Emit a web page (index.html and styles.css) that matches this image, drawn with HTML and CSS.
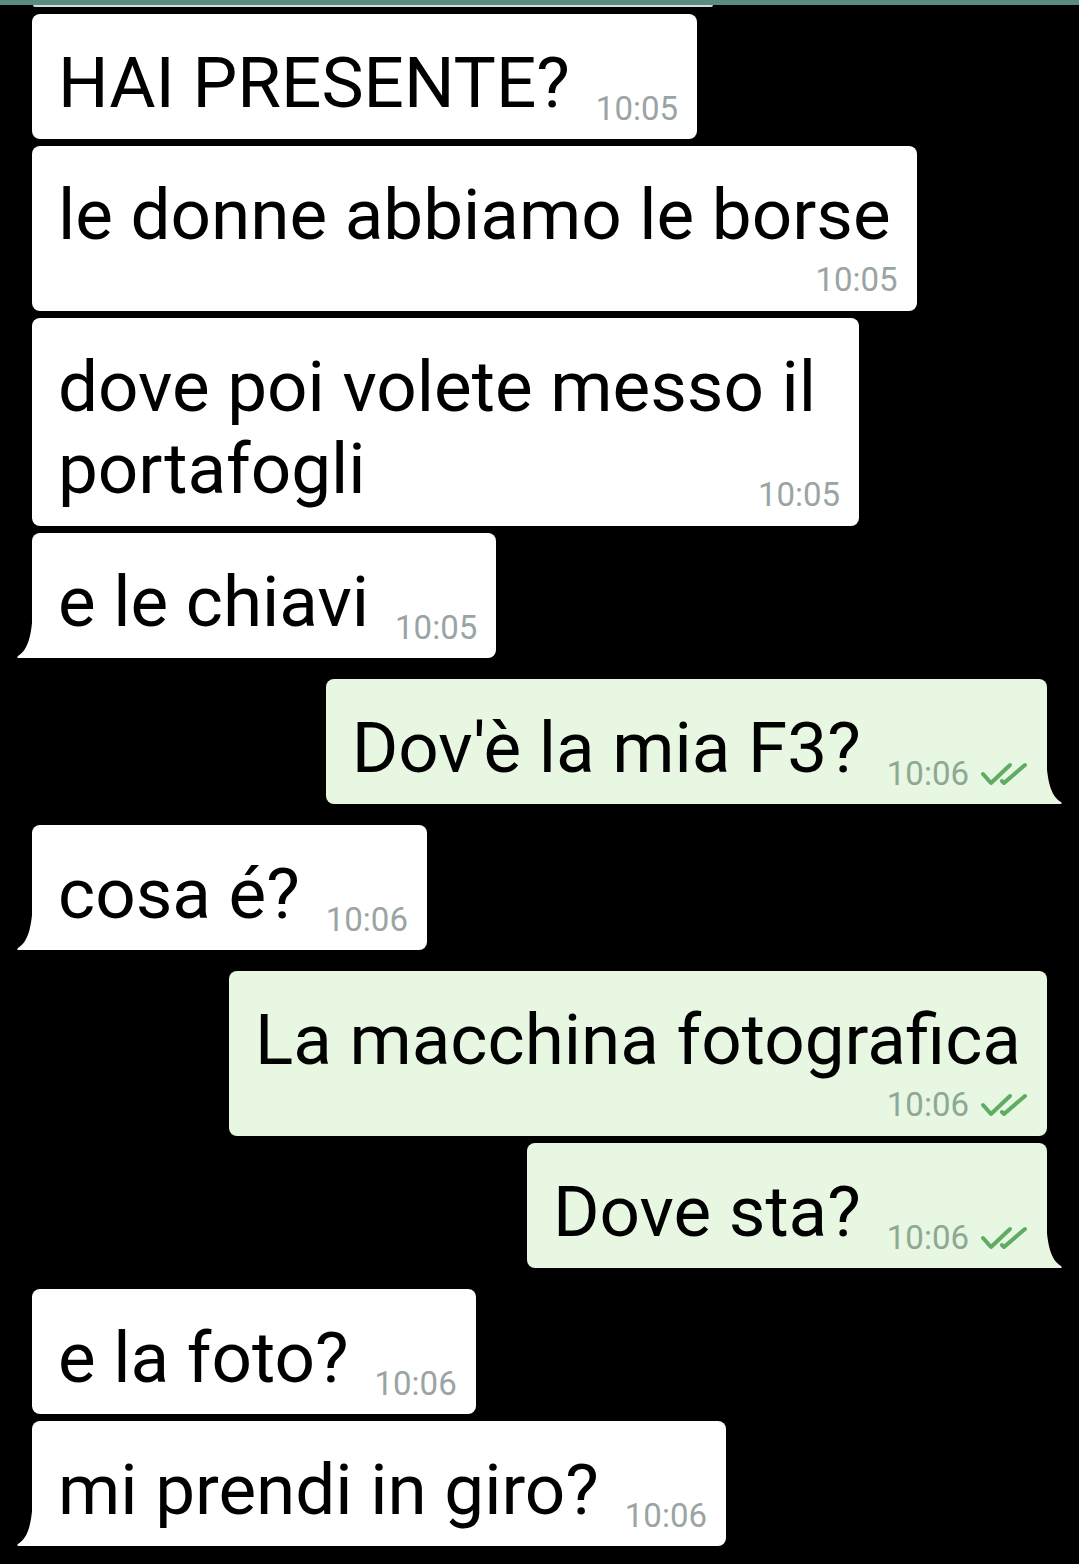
FILE: index.html
```html
<!DOCTYPE html>
<html lang="it">
<head>
<meta charset="utf-8">
<title>Chat</title>
<link rel="stylesheet" href="styles.css">
</head>
<body>
<div class="topbar"></div>
<div class="chat">
  <div class="stub"></div>

  <div class="msg in">
    <div class="bubble">
      <span class="text">HAI PRESENTE?</span>
      <span class="meta"><span class="time">10:05</span></span>
    </div>
  </div>

  <div class="msg in">
    <div class="bubble stack">
      <span class="text">le donne abbiamo le borse</span>
      <span class="meta"><span class="time">10:05</span></span>
    </div>
  </div>

  <div class="msg in">
    <div class="bubble overlay">
      <span class="text wide">dove poi volete messo il<br>portafogli</span>
      <span class="meta"><span class="time">10:05</span></span>
    </div>
  </div>

  <div class="msg in">
    <div class="bubble tail">
      <svg class="tail-shape" viewBox="0 0 17 50" width="17" height="50"><path d="M17 0 C16 28 12 42 2 48 Q0 50 3 50 L17 50 Z"/></svg>
      <span class="text">e le chiavi</span>
      <span class="meta"><span class="time">10:05</span></span>
    </div>
  </div>

  <div class="msg out group">
    <div class="bubble tail">
      <svg class="tail-shape" viewBox="0 0 17 50" width="17" height="50"><path d="M0 0 C1 28 5 42 15 48 Q17 50 14 50 L0 50 Z"/></svg>
      <span class="text">Dov'è la mia F3?</span>
      <span class="meta"><span class="time">10:06</span><svg class="ticks" viewBox="0 0 48 24" width="48" height="24"><path d="M3 12 L11 21 L30 3"/><path d="M22 19 L24 21 L45 3"/></svg></span>
    </div>
  </div>

  <div class="msg in group">
    <div class="bubble tail">
      <svg class="tail-shape" viewBox="0 0 17 50" width="17" height="50"><path d="M17 0 C16 28 12 42 2 48 Q0 50 3 50 L17 50 Z"/></svg>
      <span class="text">cosa é?</span>
      <span class="meta"><span class="time">10:06</span></span>
    </div>
  </div>

  <div class="msg out group">
    <div class="bubble stack">
      <span class="text">La macchina fotografica</span>
      <span class="meta"><span class="time">10:06</span><svg class="ticks" viewBox="0 0 48 24" width="48" height="24"><path d="M3 12 L11 21 L30 3"/><path d="M22 19 L24 21 L45 3"/></svg></span>
    </div>
  </div>

  <div class="msg out">
    <div class="bubble tail">
      <svg class="tail-shape" viewBox="0 0 17 50" width="17" height="50"><path d="M0 0 C1 28 5 42 15 48 Q17 50 14 50 L0 50 Z"/></svg>
      <span class="text">Dove sta?</span>
      <span class="meta"><span class="time">10:06</span><svg class="ticks" viewBox="0 0 48 24" width="48" height="24"><path d="M3 12 L11 21 L30 3"/><path d="M22 19 L24 21 L45 3"/></svg></span>
    </div>
  </div>

  <div class="msg in group">
    <div class="bubble">
      <span class="text">e la foto?</span>
      <span class="meta"><span class="time">10:06</span></span>
    </div>
  </div>

  <div class="msg in">
    <div class="bubble tail">
      <svg class="tail-shape" viewBox="0 0 17 50" width="17" height="50"><path d="M17 0 C16 28 12 42 2 48 Q0 50 3 50 L17 50 Z"/></svg>
      <span class="text">mi prendi in giro?</span>
      <span class="meta"><span class="time">10:06</span></span>
    </div>
  </div>
</div>
</body>
</html>
```
FILE: styles.css
```css
html, body {
  margin: 0;
  padding: 0;
  background: #000;
}
body {
  font-family: Roboto, "Noto Sans", "Liberation Sans", sans-serif;
  width: 1079px;
  height: 1564px;
  overflow: hidden;
}
.topbar {
  height: 5px;
  background: #5a8a84;
}
.chat {
  display: flex;
  flex-direction: column;
  gap: 7px;
  padding: 0 32px;
}
.stub {
  width: 680px;
  height: 2px;
  margin-left: 1px;
  background: #cfe0dc;
  border-radius: 0 0 6px 6px;
}
.msg {
  display: flex;
}
.msg.in { justify-content: flex-start; }
.msg.out { justify-content: flex-end; }
.msg.group { margin-top: 14px; }

.bubble {
  position: relative;
  display: flex;
  align-items: flex-end;
  padding: 28px 19px 11px 26px;
  border-radius: 8px;
  background: #fff;
  color: #000;
}
.msg.out .bubble {
  background: #e7f7e2;
}
.bubble.tail { border-bottom-left-radius: 0; }
.msg.out .bubble.tail { border-bottom-left-radius: 8px; border-bottom-right-radius: 0; }

.tail-shape {
  position: absolute;
  bottom: 0;
  left: -16px;
  fill: #fff;
}
.msg.out .tail-shape {
  left: auto;
  right: -16px;
  fill: #e7f7e2;
}

.text {
  font-size: 71px;
  line-height: 82px;
  margin-bottom: 4px;
  white-space: nowrap;
}
.meta {
  display: flex;
  align-items: center;
  gap: 11px;
  margin-left: 26px;
}
.time {
  font-size: 33px;
  line-height: 39px;
  color: #9aa4a4;
}
.msg.out .time { color: #8da893; }

.ticks {
  fill: none;
  stroke: #5fac63;
  stroke-width: 4;
  stroke-linecap: round;
  stroke-linejoin: round;
}

.bubble.stack {
  flex-direction: column;
  align-items: stretch;
  padding-bottom: 12px;
}
.bubble.stack .text { margin-right: 7px; }
.bubble.stack .meta {
  align-self: flex-end;
  margin-left: 0;
}

.bubble.overlay {
  display: grid;
  padding-bottom: 12px;
}
.bubble.overlay > * {
  grid-area: 1 / 1;
}
.bubble.overlay .meta {
  justify-self: end;
  align-self: end;
  margin-left: 0;
}
.text.wide { margin-right: 24px; }
```
